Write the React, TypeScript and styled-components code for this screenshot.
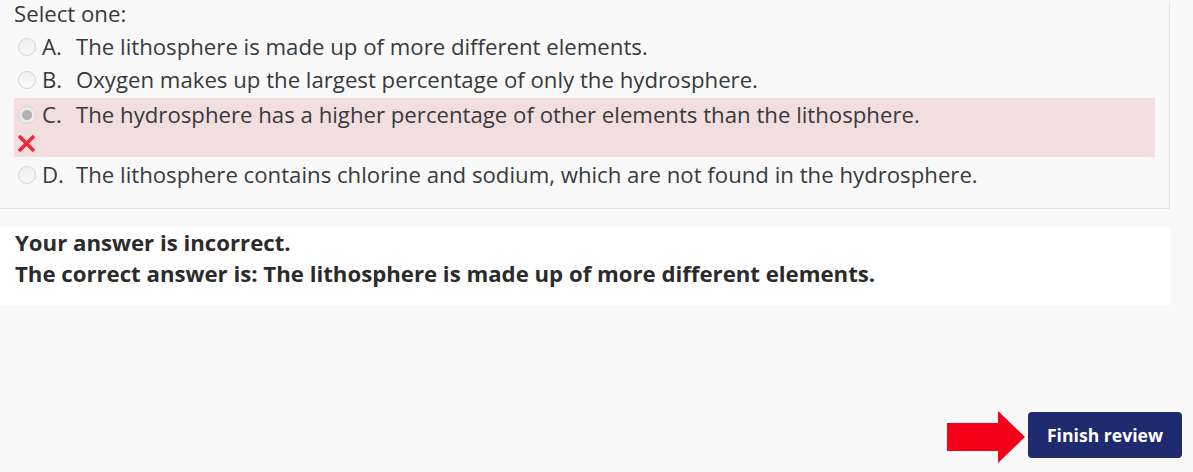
import styled, { createGlobalStyle } from 'styled-components';

const GlobalStyle = createGlobalStyle`
  html, body {
    margin: 0;
    padding: 0;
    background: #f9f9f9;
    font-family: "Open Sans", "Liberation Sans", sans-serif;
    color: #373a3c;
  }
`;

const Page = styled.div`
  width: 1193px;
  height: 472px;
  overflow: hidden;
  display: flex;
  flex-direction: column;
`;

const QuestionPanel = styled.div`
  width: 1155px;
  margin-top: 3px;
  padding: 0 0 18px 14px;
  border-right: 1px solid #e3e3e3;
  border-bottom: 1px solid #e3e3e3;
  background: #f9f9f9;
`;

const Prompt = styled.div`
  font-size: 22.2px;
  line-height: 22px;
  margin-bottom: 7px;
`;

const Answers = styled.div`
  display: flex;
  flex-direction: column;
  gap: 3px;
`;

const Option = styled.div<{ $wrong?: boolean }>`
  display: flex;
  flex-direction: column;
  width: 1141px;
  padding: ${({ $wrong }) => ($wrong ? '2px 0 1px' : '0')};
  background: ${({ $wrong }) => ($wrong ? '#f2dedf' : 'transparent')};
`;

const OptionLine = styled.div`
  display: flex;
  align-items: center;
  font-size: 22.2px;
  line-height: 30px;
`;

const Radio = styled.span<{ $checked?: boolean }>`
  width: 16px;
  height: 16px;
  margin: 0 6px 0 4px;
  border-radius: 50%;
  border: 1px solid #d4d4d4;
  background: ${({ $checked }) =>
    $checked
      ? 'radial-gradient(circle, #b3b3b3 0 4.5px, #ececec 5.5px)'
      : 'linear-gradient(#f0f0f0, #f8f8f8)'};
  flex-shrink: 0;
`;

const Letter = styled.span`
  width: 34px;
`;

const WrongMark = styled.div`
  height: 26px;
  padding-left: 3px;
  display: flex;
  align-items: center;
`;

const Feedback = styled.div`
  width: 1140px;
  margin-top: 18px;
  padding: 0 15px 16px 15px;
  background: #ffffff;
  font-size: 22.2px;
  line-height: 31px;
  font-weight: 700;
  color: #2b2b2b;
`;

const Footer = styled.div`
  flex: 1;
  display: flex;
  justify-content: flex-end;
  align-items: flex-end;
  gap: 3px;
  padding: 0 11px 14px 0;
`;

const FinishButton = styled.button`
  width: 154px;
  height: 46px;
  border: none;
  border-radius: 4px;
  background: #1f2b6e;
  color: #ffffff;
  font-family: "Open Sans", "Liberation Sans", sans-serif;
  font-size: 17.6px;
  font-weight: 700;
  cursor: pointer;
`;

const ArrowWrap = styled.div`
  margin-bottom: -5px;
  display: flex;
`;

const options = [
  { letter: 'A.', text: 'The lithosphere is made up of more different elements.' },
  { letter: 'B.', text: 'Oxygen makes up the largest percentage of only the hydrosphere.' },
  {
    letter: 'C.',
    text: 'The hydrosphere has a higher percentage of other elements than the lithosphere.',
    checked: true,
    wrong: true,
  },
  {
    letter: 'D.',
    text: 'The lithosphere contains chlorine and sodium, which are not found in the hydrosphere.',
  },
];

const App = () => {
  return (
    <Page>
      <GlobalStyle />
      <QuestionPanel>
        <Prompt>Select one:</Prompt>
        <Answers>
          {options.map((o) => (
            <Option key={o.letter} $wrong={o.wrong}>
              <OptionLine>
                <Radio $checked={o.checked} />
                <Letter>{o.letter}</Letter>
                <span>{o.text}</span>
              </OptionLine>
              {o.wrong && (
                <WrongMark>
                  <svg width="19" height="19" viewBox="0 0 19 19">
                    <path
                      d="M2 2 L17 17 M17 2 L2 17"
                      stroke="#f2283d"
                      strokeWidth="3.6"
                      strokeLinecap="butt"
                    />
                  </svg>
                </WrongMark>
              )}
            </Option>
          ))}
        </Answers>
      </QuestionPanel>
      <Feedback>
        <div>Your answer is incorrect.</div>
        <div>The correct answer is: The lithosphere is made up of more different elements.</div>
      </Feedback>
      <Footer>
        <ArrowWrap>
          <svg width="78" height="52" viewBox="0 0 78 52">
            <path d="M0 12 H51 V0 L78 26 L51 52 V40 H0 Z" fill="#f5001a" />
          </svg>
        </ArrowWrap>
        <FinishButton>Finish review</FinishButton>
      </Footer>
    </Page>
  );
};

export default App;
